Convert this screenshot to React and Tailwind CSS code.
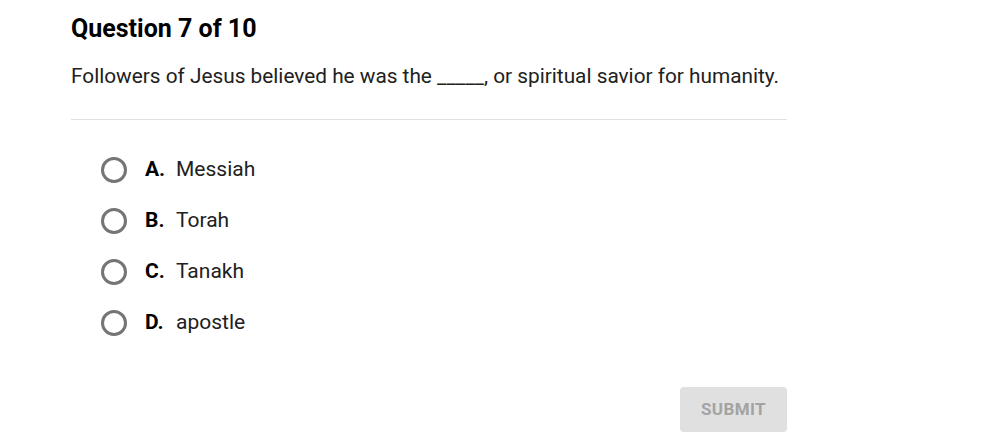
import React from "react";

const options = [
  { letter: "A.", text: "Messiah" },
  { letter: "B.", text: "Torah" },
  { letter: "C.", text: "Tanakh" },
  { letter: "D.", text: "apostle" },
];

export default function App() {
  return (
    <div
      className="w-[1007px] h-[437px] bg-white overflow-hidden"
      style={{ fontFamily: "Roboto, 'Liberation Sans', sans-serif" }}
    >
      <div className="pl-[71px] w-[787px] pt-[14px]">
        <h1 className="text-[25px] leading-[30px] font-bold text-black">Question 7 of 10</h1>
        <p className="mt-[17px] text-[20.8px] leading-[30px] text-[#212121]">
          Followers of Jesus believed he was the _____, or spiritual savior for humanity.
        </p>
        <div className="mt-[28px] h-px bg-[#e0e0e0]" />
        <div className="pt-[37px] pl-[30px] flex flex-col gap-[25px]">
          {options.map((o) => (
            <div key={o.letter} className="flex items-center h-[26px]">
              <div className="w-[26px] h-[26px] rounded-full border-[3px] border-[#757575]" />
              <span className="ml-[18px] w-[31px] text-[21px] font-bold text-black">{o.letter}</span>
              <span className="text-[21px] text-[#212121]">{o.text}</span>
            </div>
          ))}
        </div>
        <div className="flex justify-end mt-[51px]">
          <button className="w-[107px] h-[45px] rounded-[4px] bg-[#e0e0e0] text-[#a3a3a3] text-[17px] font-bold tracking-[0.4px]">
            SUBMIT
          </button>
        </div>
      </div>
    </div>
  );
}
